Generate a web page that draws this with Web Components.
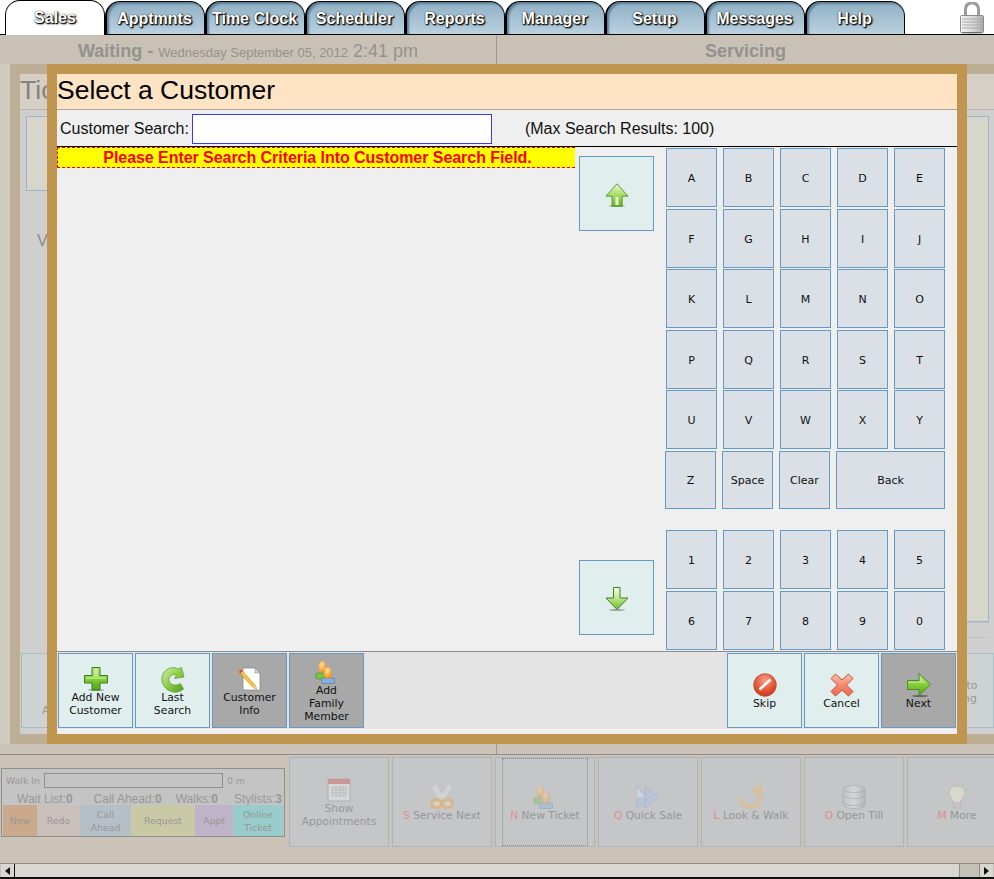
<!DOCTYPE html>
<html>
<head>
<meta charset="utf-8">
<title>Select a Customer</title>
<style>
html, body { margin: 0; padding: 0; background: #cbc3b7; overflow: hidden; }
</style>
</head>
<body>
<pos-app></pos-app>
<script>
const shadowBar = '<ellipse cx="12" cy="23" rx="8" ry="1" fill="#000" opacity=".3"/>';
const greenV = '<defs><linearGradient id="g" x1="0" y1="0" x2="0" y2="1"><stop offset="0" stop-color="#eaf8d8"/><stop offset=".5" stop-color="#a6de62"/><stop offset="1" stop-color="#62b21e"/></linearGradient></defs>';
const greenH = '<defs><linearGradient id="g" x1="0" y1="0" x2="0" y2="1"><stop offset="0" stop-color="#b4e67c"/><stop offset=".5" stop-color="#86d038"/><stop offset="1" stop-color="#52a416"/></linearGradient></defs>';
const ICONS = {
    up: greenV + shadowBar + '<path d="M12 .8 L23 13.2 H17.2 V23.2 H7 V13.2 H1 Z" fill="url(#g)" stroke="#5c9a34" stroke-linejoin="round"/><path d="M10.5 14 h3 v8 h-3 z" fill="#eef9dd"/>',
    down: '<defs><linearGradient id="g" x1="0" y1="0" x2="0" y2="1"><stop offset="0" stop-color="#f4fbe8"/><stop offset=".45" stop-color="#c4ea8c"/><stop offset="1" stop-color="#6cb826"/></linearGradient></defs>' + shadowBar + '<path d="M8.5 .5 H15 V11 H23 L12 22.5 L1 11 H8.5 Z" fill="url(#g)" stroke="#3f7f2a" stroke-linejoin="round"/>',
    plus: greenH + '<ellipse cx="12" cy="23" rx="8" ry="1" fill="#000" opacity=".3"/><path d="M8 .5 H16 V8.5 H23.5 V16 H16 V23 H8 V16 H.5 V8.5 H8 Z" fill="url(#g)" stroke="#3c7c24" stroke-linejoin="round"/><path d="M10 2 H14 V10 H22 V12 H2 V10 H10 Z" fill="#fff" opacity=".35"/>',
    redo: '<defs><linearGradient id="g" x1="0" y1="0" x2="1" y2="1"><stop offset="0" stop-color="#d4f0a8"/><stop offset=".5" stop-color="#8ccf44"/><stop offset="1" stop-color="#4f9e1c"/></linearGradient></defs><path d="M22.5 22 A13 13 0 0 1 3 19 C-1 13 1 5 7 2 C11 0 15 .5 17 2 L20.5 .5 L23 10 L13.5 11.5 L15.5 8 C12.5 6.5 9 8 8 11 C7 15 10 18 13.5 18 C16 18 18 17.5 19.5 16.5 Z" fill="url(#g)" stroke="#5f9e3a" stroke-width=".8" stroke-linejoin="round"/>',
    note: '<path d="M5 1 H17 L22 6 V23 H5 Z" fill="#fff" stroke="#8a8a8a" stroke-width=".8"/><path d="M17 1 V6 H22 Z" fill="#d6d6d6" stroke="#8a8a8a" stroke-width=".6"/><path d="M3 2.5 L17 18 L19 22 L15 20.5 L1 5 Z" fill="#f3c93a" stroke="#b98a1e" stroke-width=".6"/><path d="M1 5 L3 2.5 L4.5 4 L2.5 6.5 Z" fill="#d8443a"/><path d="M17 18 L19 22 L15 20.5 Z" fill="#e9c9a8"/>',
    people: '<defs><radialGradient id="o" cx=".4" cy=".3" r=".8"><stop offset="0" stop-color="#ffe2a0"/><stop offset=".6" stop-color="#f9a63a"/><stop offset="1" stop-color="#e2741a"/></radialGradient></defs><rect x="1" y="13" width="11" height="6" rx="1" fill="#7dc644" stroke="#4f8c2a" stroke-width=".6"/><rect x="6.5" y="18" width="13" height="5.5" rx="1" fill="#86aee0" stroke="#4f74a8" stroke-width=".6"/><ellipse cx="7.5" cy="7" rx="4" ry="6" fill="url(#o)"/><ellipse cx="13" cy="13" rx="4" ry="6" fill="url(#o)"/>',
    skip: '<defs><radialGradient id="r" cx=".5" cy=".3" r=".8"><stop offset="0" stop-color="#f6a088"/><stop offset=".6" stop-color="#e0502e"/><stop offset="1" stop-color="#b8321c"/></radialGradient></defs><circle cx="12" cy="12" r="11.3" fill="url(#r)" stroke="#b84a34" stroke-width=".8"/><path d="M6.5 16.5 L17.5 6.5" stroke="#fff" stroke-width="2.6"/>',
    cancel: '<defs><linearGradient id="r" x1="0" y1="0" x2="0" y2="1"><stop offset="0" stop-color="#fbc4b0"/><stop offset=".5" stop-color="#f28a70"/><stop offset="1" stop-color="#ea6c50"/></linearGradient></defs><path d="M5.5 1 L12 7 L18.5 1 L23 5.5 L16.5 12 L23 18.5 L18.5 23 L12 17 L5.5 23 L1 18.5 L7.5 12 L1 5.5 Z" fill="url(#r)" stroke="#d44a32" stroke-linejoin="round"/>',
    next: greenH + '<ellipse cx="13" cy="23" rx="8" ry="1" fill="#000" opacity=".4"/><path d="M.5 7.5 H12 V.5 L23.5 11.5 L12 22.5 V16.5 H.5 Z" fill="url(#g)" stroke="#4e8a2c" stroke-linejoin="round"/><path d="M1.5 8.5 H13 V4 L19 10 H1.5 Z" fill="#fff" opacity=".3"/>',
    calendar: '<rect x="1" y="1" width="22" height="22" rx="1" fill="#f4f4f4" stroke="#8a8a8a"/><rect x="1" y="1" width="22" height="5" fill="#d84a4a"/><path d="M5 9 h14 v9 h-14 z M5 12 h14 M5 15 h14 M9 9 v9 M13 9 v9 M16 9 v9" fill="none" stroke="#9a9a9a" stroke-width=".8"/>',
    scissors: '<path d="M4 1 L14 17 M20 1 L10 17" stroke="#f8f8f8" stroke-width="4"/><path d="M4 1 L14 17 M20 1 L10 17" stroke="#9a9a9a" stroke-width=".5"/><ellipse cx="6.5" cy="18.5" rx="5" ry="4" fill="#f8e0b8" stroke="#f4a030" stroke-width="3"/><ellipse cx="17.5" cy="18.5" rx="5" ry="4" fill="#f8e0b8" stroke="#f4a030" stroke-width="3"/>',
    forward: '<path d="M1 1 L13 12 L1 23 Z M9 1 L22 12 L9 23 Z" fill="#a8c4f0" stroke="#7c9ad0" stroke-width=".7"/><path d="M1 3 L9 12 L1 12 Z" fill="#f4f8ff" opacity=".8"/>',
    uturn: '<path d="M2.5 13 C3 20 8 22 13 22 C19 22 22 17 21 11 C20.5 8 19 6.5 16 6" fill="none" stroke="#f4b860" stroke-width="4.5"/><path d="M11 6 L18 .5 H23 V10 Z" fill="#f4b860"/>',
    till: '<defs><linearGradient id="d" x1="0" y1="0" x2="1" y2="0"><stop offset="0" stop-color="#bdbdbd"/><stop offset=".5" stop-color="#eeeeee"/><stop offset="1" stop-color="#a0a0a0"/></linearGradient></defs><g fill="url(#d)" stroke="#7c7c7c" stroke-width=".7"><path d="M1 17 v3 a11 3.5 0 0 0 22 0 v-3 z"/><path d="M1 10 v7 a11 3.5 0 0 0 22 0 v-7 z"/><path d="M1 4 v6 a11 3.5 0 0 0 22 0 v-6 z"/><ellipse cx="12" cy="4" rx="11" ry="3.5"/></g>',
    bulb: '<path d="M12 1 C6 1 4 5 4 8 C4 12 8 13 8.5 18 H15.5 C16 13 20 12 20 8 C20 5 18 1 12 1 Z" fill="#fff6d6" stroke="#a8a078" stroke-width=".8"/><rect x="8.5" y="18" width="7" height="5" fill="#c4c4c4" stroke="#8a8a8a" stroke-width=".6"/>'
};

class AppIcon extends HTMLElement {
    connectedCallback() {
        const name = this.getAttribute('name');
        const root = this.shadowRoot || this.attachShadow({ mode: 'open' });
        root.innerHTML = `
            <style>
                :host { display: block; width: 24px; height: 24px; flex: none; }
                :host([dim]) { opacity: .38; }
                svg { display: block; overflow: visible; }
            </style>
            <svg width="24" height="24" viewBox="0 0 24 24">${ICONS[name] || ''}</svg>`;
    }
}
customElements.define('app-icon', AppIcon);

class TabItem extends HTMLElement {
    constructor() {
        super();
        this.attachShadow({ mode: 'open' }).innerHTML = `
            <style>
                :host {
                    display: flex; align-items: center; justify-content: center;
                    box-sizing: border-box; width: 100px; height: 33px; padding: 1px 2px 0 0;
                    font: bold 16px "Liberation Sans", Arial, sans-serif; color: #fff;
                    text-shadow: 0 0 1px #000, 1px 1px 2px #000, 1px 1px 1px #222;
                    background: linear-gradient(#8fb0c5, #bad1e0);
                    border: 1px solid #000; border-bottom: 0; border-left-width: 2px;
                    border-radius: 15px 15px 0 0;
                    box-shadow: inset 2px 2px 2px #5d7f95;
                }
                :host([active]) { background: #fff; box-shadow: none; height: 35px; padding: 0; border-left-width: 1px; margin-bottom: -1px; position: relative; z-index: 1; }
            </style>
            <slot></slot>`;
    }
}
customElements.define('tab-item', TabItem);

class TabBar extends HTMLElement {
    constructor() {
        super();
        this.attachShadow({ mode: 'open' }).innerHTML = `
            <style>
                :host {
                    display: flex; align-items: flex-end; position: relative;
                    box-sizing: border-box; height: 35px; padding-left: 5px;
                    background: #fff; border-bottom: 1px solid #000;
                }
                svg { margin: 0 0 0 55px; align-self: flex-start; margin-top: 2px; }
            </style>
            <slot></slot>
            <svg width="24" height="32" viewBox="0 0 24 32">
                <defs><linearGradient id="b" x1="0" y1="0" x2="1" y2="0"><stop offset="0" stop-color="#f4f4f4"/><stop offset=".6" stop-color="#d4d4d4"/><stop offset="1" stop-color="#a8a8a8"/></linearGradient></defs>
                <path d="M5.5 14 V8 C5.5 3.5 8 1 12 1 C16 1 18.5 3.5 18.5 8 V14" fill="none" stroke="#9c9c9c" stroke-width="3"/>
                <rect x=".5" y="13.5" width="23" height="17" rx="1" fill="url(#b)" stroke="#8c8c8c"/>
                <path d="M2 17 H22 M2 20 H22 M2 23 H22 M2 26 H22" stroke="#a8a8a8"/>
                <ellipse cx="12" cy="31" rx="11" ry="1" fill="#000" opacity=".25"/>
            </svg>`;
    }
}
customElements.define('tab-bar', TabBar);

class StatusHead extends HTMLElement {
    constructor() {
        super();
        this.attachShadow({ mode: 'open' }).innerHTML = `
            <style>
                :host {
                    display: grid; grid-template-columns: 496px 1px 1fr;
                    height: 29px; background: #c9c1b5; color: #939290;
                    font: 18px/33px "Liberation Sans", Arial, sans-serif; text-align: center;
                    white-space: nowrap;
                }
                b { font-weight: bold; }
                small { font-size: 13px; }
                i { background: #9d9890; }
            </style>
            <div><b>Waiting -</b> <small>Wednesday September 05, 2012</small> 2:41 pm</div>
            <i></i>
            <div><b>Servicing</b></div>`;
    }
}
customElements.define('status-head', StatusHead);

class ActionButton extends HTMLElement {
    connectedCallback() {
        const icon = this.getAttribute('icon');
        const hot = this.getAttribute('hot');
        const dim = this.hasAttribute('dim') ? 'dim' : '';
        const root = this.shadowRoot || this.attachShadow({ mode: 'open' });
        root.innerHTML = `
            <style>
                :host {
                    display: flex; flex: none; flex-direction: column; align-items: center; justify-content: center;
                    box-sizing: border-box; width: 75px; height: 75px; padding-top: 2px; position: relative;
                    background: #e0eeee; border: 1px solid #659ac7; color: #111;
                    font: 10.85px/13px "DejaVu Sans", sans-serif; text-align: center;
                }
                :host([dark]) { background: #a8a8a8; }
                :host([ghost]) { background: #c4c6c8; border-color: #a9b5bd; color: #979797; width: 100px; height: 90px; font-size: 10.67px; }
                :host([under]) { background: #cdd3d3; border-color: #a9bcc8; color: #979797; }
                .hot { color: #dd8f8f; }
                .focus { position: absolute; left: 6px; right: 6px; top: 0; bottom: 0; border: 1px dotted #8a8a8a; }
                :host(:not([focused])) .focus { display: none; }
            </style>
            <div class="focus"></div>
            ${icon ? `<app-icon name="${icon}" ${dim}></app-icon>` : ''}
            <div>${hot ? `<span class="hot">${hot}</span> ` : ''}<slot></slot></div>`;
    }
}
customElements.define('action-button', ActionButton);

class KeyPad extends HTMLElement {
    constructor() {
        super();
        const rows = [
            [61, 'ABCDE'.split('')], [60, 'FGHIJ'.split('')], [61, 'KLMNO'.split('')],
            [60, 'PQRST'.split('')], [61, 'UVWXY'.split('')],
            [79, ['Z', 'Space', 'Clear', 'Back']],
            [61, '12345'.split('')], [59, '67890'.split('')]
        ];
        const html = rows.map(([h, keys]) => {
            const bottom = keys.includes('Z') ? ' wide' : '';
            return `<div class="row${bottom}" style="height:${h}px">` +
                keys.map(k => `<div class="key${k === 'Back' ? ' back' : ''}">${k}</div>`).join('') + '</div>';
        }).join('');
        this.attachShadow({ mode: 'open' }).innerHTML = `
            <style>
                :host { display: block; width: 280px; padding-top: 1px; font: 11px "DejaVu Sans", sans-serif; color: #111; }
                .row { display: flex; gap: 6px; align-items: flex-start; }
                .wide { margin-left: -1px; }
                .key {
                    box-sizing: border-box; width: 51px; height: 59px; flex: none; padding-top: 1px;
                    display: flex; align-items: center; justify-content: center;
                    background: #dbdfe6; border: 1px solid #659ac7;
                }
                .wide .key { height: 58px; }
                .back { width: 109px; }
            </style>
            ${html}`;
    }
}
customElements.define('key-pad', KeyPad);

class CustomerDialog extends HTMLElement {
    constructor() {
        super();
        this.attachShadow({ mode: 'open' }).innerHTML = `
            <style>
                :host {
                    display: flex; flex-direction: column; position: absolute; left: 47px; top: 64px;
                    box-sizing: border-box; width: 920px; height: 680px;
                    border: 10px solid #bf9550; background: #efefef;
                    font-family: "Liberation Sans", Arial, sans-serif; color: #111;
                }
                .title { height: 35px; line-height: 32px; font-size: 26.5px; color: #000; background: #fee3c5; border-bottom: 1px solid #b0a596; }
                .search { display: flex; align-items: center; box-sizing: border-box; height: 37px; padding: 2px 0 0 3px; font-size: 16px; border-bottom: 1px solid #000; }
                input { box-sizing: border-box; width: 300px; height: 30px; margin: 0 33px 0 3px; padding: 0; border: 1px solid #3a3aee; background: #fff; outline: none; }
                .middle { flex: 1; display: flex; min-height: 0; }
                .list { width: 518px; flex: none; }
                .banner {
                    box-sizing: border-box; height: 21px; padding-left: 2px; text-align: center; background: #ff0; color: #f00;
                    font: bold 16px/19px "Liberation Sans", Arial, sans-serif; letter-spacing: -.05px;
                    border: 1px dashed #e00000; border-right: 0;
                }
                .arrows { display: flex; flex-direction: column; justify-content: space-between; width: 75px; margin: 9px 12px 16px 4px; }
                .bar { display: flex; gap: 2px; height: 76px; padding: 1px 1px 5px 1px; background: linear-gradient(#e4e4e4 77px, #efefef 77px); border-top: 1px solid #8a8a8a; }
                .spacer { flex: 1; }
            </style>
            <div class="title">Select a Customer</div>
            <div class="search">
                <span>Customer Search:</span>
                <input type="text" aria-label="Customer Search">
                <span>(Max Search Results: 100)</span>
            </div>
            <div class="middle">
                <div class="list"><div class="banner">Please Enter Search Criteria Into Customer Search Field.</div></div>
                <div class="arrows">
                    <action-button icon="up"></action-button>
                    <action-button icon="down"></action-button>
                </div>
                <key-pad></key-pad>
            </div>
            <div class="bar">
                <action-button icon="plus">Add New<br>Customer</action-button>
                <action-button icon="redo">Last<br>Search</action-button>
                <action-button icon="note" dark>Customer<br>Info</action-button>
                <action-button icon="people" dark>Add<br>Family<br>Member</action-button>
                <div class="spacer"></div>
                <action-button icon="skip">Skip</action-button>
                <action-button icon="cancel">Cancel</action-button>
                <action-button icon="next" dark>Next</action-button>
            </div>`;
    }
}
customElements.define('customer-dialog', CustomerDialog);

class TicketPanel extends HTMLElement {
    constructor() {
        super();
        this.attachShadow({ mode: 'open' }).innerHTML = `
            <style>
                :host {
                    display: flex; flex-direction: column; flex: 1; min-width: 0;
                    border: solid #bfae96; border-width: 10px 0 10px 10px; background: #cfcfcf;
                    font-family: "Liberation Sans", Arial, sans-serif;
                }
                .title { height: 35px; line-height: 32px; font-size: 26.67px; color: #86827c; background: #d6cfc5; border-bottom: 1px solid #b8b2a8; }
                .body { flex: 1; display: flex; justify-content: space-between; padding: 6px 5px 0 6px; min-height: 0; }
                .left { width: 300px; }
                .box { box-sizing: border-box; background: #d6d6cb; border: 1px solid #a0b4c8; }
                .left .box { height: 75px; }
                .left p { margin: 41px 0 0 11px; font-size: 16px; line-height: 18px; color: #8a8a8a; }
                .right { width: 300px; }
                .right .box { height: 506px; }
                .right .tail { height: 16px; margin-top: 0; border-width: 1px 0 1px 0; border-color: #bfc2c2; background: #cfcfcf; }
                .bottom { display: flex; justify-content: space-between; padding: 2px 0 6px 1px; }
                .add { padding: 39px 12px 0 0; }
            </style>
            <div class="title">Tic</div>
            <div class="body">
                <div class="left"><div class="box"></div><p>V</p></div>
                <div class="right"><div class="box"></div><div class="box tail"></div></div>
            </div>
            <div class="bottom">
                <action-button under style="padding: 39px 12px 0 0">Add</action-button>
                <action-button under>Send to<br>Waiting</action-button>
            </div>`;
    }
}
customElements.define('ticket-panel', TicketPanel);

class WalkPanel extends HTMLElement {
    constructor() {
        super();
        this.attachShadow({ mode: 'open' }).innerHTML = `
            <style>
                :host {
                    display: block; box-sizing: border-box; flex: none; width: 284px; height: 69px;
                    margin: 13px 4px 0 1px; padding: 1px 1px 0 1px;
                    background: #c4c4c4; border: 1px solid #8f8f8f; color: #979797;
                    font: 9.33px "DejaVu Sans", sans-serif;
                }
                .walk { display: flex; align-items: center; height: 21px; padding-left: 3px; }
                .walk i { box-sizing: border-box; width: 179px; height: 15px; margin: 0 4px 0 4px; border: 1px solid #8f8f8f; }
                .counts { display: flex; height: 13px; margin-top: 1px; align-items: center; font: 12px "Liberation Sans", Arial, sans-serif; }
                .counts span { flex: none; }
                .cells { display: flex; height: 31px; text-align: center; line-height: 13px; }
                .cells div { display: flex; align-items: center; justify-content: center; flex: none; }
            </style>
            <div class="walk">Walk In<i></i>0 m</div>
            <div class="counts">
                <span style="margin-left:14px">Wait List:<b>0</b></span>
                <span style="margin-left:21px">Call Ahead:<b>0</b></span>
                <span style="margin-left:14px">Walks:<b>0</b></span>
                <span style="margin-left:16px">Stylists:<b>3</b></span>
            </div>
            <div class="cells">
                <div style="width:34px;background:#caa98c">New</div>
                <div style="width:43px;background:#cbbfbc">Redo</div>
                <div style="width:51px;background:#b5bfc7">Call<br>Ahead</div>
                <div style="width:64px;background:#c9c9a5">Request</div>
                <div style="width:38px;background:#bfb3c9">Appt</div>
                <div style="width:50px;background:#97cccb">Online<br>Ticket</div>
            </div>`;
    }
}
customElements.define('walk-panel', WalkPanel);

class ActionBar extends HTMLElement {
    constructor() {
        super();
        this.attachShadow({ mode: 'open' }).innerHTML = `
            <style>
                :host { display: flex; height: 108px; background: #cbc3b7; overflow: hidden; }
                .btns { display: flex; gap: 3px; padding-top: 2px; align-items: flex-start; }
            </style>
            <walk-panel></walk-panel>
            <div class="btns">
                <action-button ghost icon="calendar" dim>Show<br>Appointments</action-button>
                <action-button ghost icon="scissors" dim hot="S">Service Next</action-button>
                <action-button ghost focused icon="people" dim hot="N">New Ticket</action-button>
                <action-button ghost icon="forward" dim hot="Q">Quick Sale</action-button>
                <action-button ghost icon="uturn" dim hot="L">Look &amp; Walk</action-button>
                <action-button ghost icon="till" dim hot="O">Open Till</action-button>
                <action-button ghost icon="bulb" dim hot="M">More</action-button>
            </div>`;
    }
}
customElements.define('action-bar', ActionBar);

class HScrollbar extends HTMLElement {
    constructor() {
        super();
        this.attachShadow({ mode: 'open' }).innerHTML = `
            <style>
                :host {
                    display: flex; box-sizing: border-box; height: 16px; padding: 0 1px;
                    background: #c4c1b9; border-top: 1px solid #8f8b84; border-bottom: 2px solid #111;
                }
                .btn { display: flex; align-items: center; justify-content: center; width: 13px; background: #d9d7d1; border-right: 1px solid #111; }
                .btn.end { border-right: 0; border-left: 1px solid #8f8b84; margin-left: auto; }
                .thumb { width: 945px; background: #d9d7d1; border-right: 1px solid #8f8b84; box-sizing: border-box; }
            </style>
            <div class="btn"><svg width="5" height="8"><path d="M5 0 V8 L0 4 Z" fill="#111"/></svg></div>
            <div class="thumb"></div>
            <div class="btn end"><svg width="5" height="8"><path d="M0 0 V8 L5 4 Z" fill="#111"/></svg></div>`;
    }
}
customElements.define('h-scrollbar', HScrollbar);

class PosApp extends HTMLElement {
    constructor() {
        super();
        this.attachShadow({ mode: 'open' }).innerHTML = `
            <style>
                :host {
                    display: flex; flex-direction: column; position: relative;
                    width: 994px; height: 879px; overflow: hidden; background: #cbc3b7;
                }
                .work { display: flex; height: 680px; padding-left: 10px; background: #cfcbc1; }
                .split { box-sizing: border-box; height: 11px; background: linear-gradient(#9d9890, #9d9890) 496px 0 / 1px 100% no-repeat; border-bottom: 1px solid #8f8a84; }
            </style>
            <tab-bar>
                <tab-item active>Sales</tab-item>
                <tab-item>Apptmnts</tab-item>
                <tab-item>Time Clock</tab-item>
                <tab-item>Scheduler</tab-item>
                <tab-item>Reports</tab-item>
                <tab-item>Manager</tab-item>
                <tab-item>Setup</tab-item>
                <tab-item>Messages</tab-item>
                <tab-item>Help</tab-item>
            </tab-bar>
            <status-head></status-head>
            <div class="work"><ticket-panel></ticket-panel></div>
            <div class="split"></div>
            <action-bar></action-bar>
            <h-scrollbar></h-scrollbar>
            <customer-dialog></customer-dialog>`;
    }
}
customElements.define('pos-app', PosApp);
</script>
</body>
</html>
